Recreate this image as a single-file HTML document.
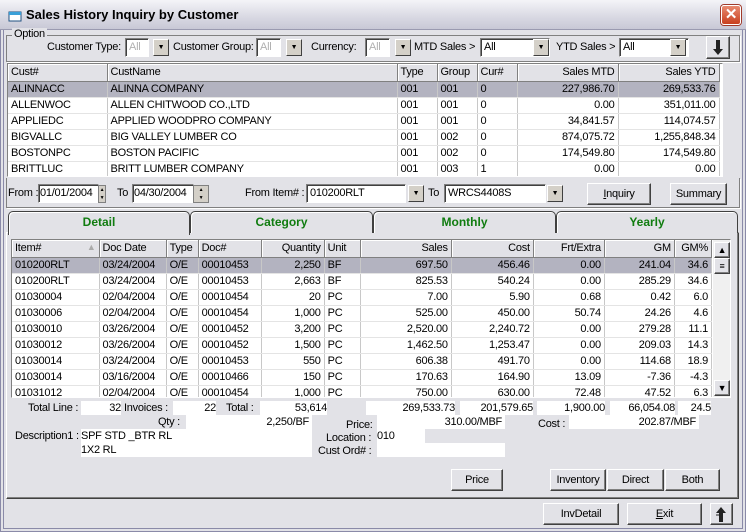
<!DOCTYPE html>
<html><head><meta charset="utf-8"><style>
*{box-sizing:border-box;margin:0;padding:0}
body{width:746px;height:532px;overflow:hidden;background:#e2e2e7;font-family:"Liberation Sans",sans-serif;font-size:11px;letter-spacing:-0.25px;color:#000;position:relative}
.a{position:absolute}
.win{left:0;top:0;width:746px;height:532px;border:1px solid #555566;border-left:4px double #8a8aa8;border-right:4px double #8a8aa8;border-bottom:4px double #8a8aa8}
.title{left:0;top:0;width:746px;height:30px;background:linear-gradient(#f4f4f8,#d8d8e2 60%,#c8c8d6);border-bottom:1px solid #9a9ab0}
.tt{left:26px;top:7px;font-weight:bold;font-size:13px;letter-spacing:0}
.close{left:721px;top:5px;width:20px;height:20px;background:linear-gradient(#e88a70,#c8401f);border:1px solid #fff;border-radius:3px;box-shadow:0 0 0 1px #a03a2a;color:#fff;font-weight:bold;font-size:15px;text-align:center;line-height:18px}
.inp{background:#fff;border:1px solid;border-color:#808080 #fff #fff #808080;box-shadow:inset 1px 1px #404040;height:19px;line-height:17px;padding-left:3px;white-space:nowrap;overflow:hidden}
.dis{color:#b0b0b0}
.dd{width:16px;height:17px;background:#d4d0c8;border:1px solid;border-color:#fff #404040 #404040 #fff;text-align:center;font-size:7px;line-height:15px}
.btn{background:#e2e2e7;border:1px solid;border-color:#fff #404040 #404040 #fff;box-shadow:inset -1px -1px #808080;text-align:center;line-height:20px;height:22px}
table{border-collapse:collapse;table-layout:fixed;background:#fff}
td{height:16px;border-right:1px solid #c8c8c8;border-bottom:1px solid #e4e4e4;padding:0 3px;white-space:nowrap;overflow:hidden;line-height:15px}
th{height:17px;font-weight:normal;text-align:left;background:#e2e2e7;border-right:1px solid #808080;border-bottom:1px solid #808080;box-shadow:inset 1px 1px #fff;padding:0 3px;white-space:nowrap;overflow:hidden}
.r{text-align:right}
tr.sel td{background:#b3b3c0}
.grid{overflow:hidden;border:1px solid;border-color:#808080 #fff #fff #808080;background:#fff}
.tab{top:211px;height:22px;border:1px solid #404040;border-bottom:none;border-radius:5px 5px 0 0;background:#e2e2e7;color:#107c10;font-weight:bold;font-size:12px;letter-spacing:0;text-align:center;line-height:20px;box-shadow:inset 1px 1px #fff}
.wf{background:#fff;height:14px;line-height:14px;white-space:nowrap;overflow:hidden}
</style></head><body>
<div class="a win"></div>
<div class="a title"></div>
<svg class="a" style="left:8px;top:10px" width="14" height="12"><rect x="1" y="2" width="12" height="9" fill="#fff" stroke="#205080"/><rect x="1" y="2" width="12" height="3" fill="#3aa0d8"/></svg>
<div class="a tt">Sales History Inquiry by Customer</div>
<div class="a close">✕</div>

<div class="a" style="left:6px;top:35px;width:734px;height:27px;border:1px solid #808080;box-shadow:1px 1px #fff"></div>
<div class="a" style="left:12px;top:28px;background:#e2e2e7;padding:0 2px">Option</div>
<div class="a" style="left:47px;top:41px">Customer Type:</div>
<div class="a inp dis" style="left:125px;top:38px;width:24px">All</div>
<div class="a dd" style="left:153px;top:39px">▼</div>
<div class="a" style="left:173px;top:41px">Customer Group:</div>
<div class="a inp dis" style="left:256px;top:38px;width:25px">All</div>
<div class="a dd" style="left:286px;top:39px">▼</div>
<div class="a" style="left:311px;top:41px">Currency:</div>
<div class="a inp dis" style="left:365px;top:38px;width:25px">All</div>
<div class="a dd" style="left:395px;top:39px">▼</div>
<div class="a" style="left:414px;top:41px">MTD Sales &gt;</div>
<div class="a inp" style="left:480px;top:38px;width:70px">All</div>
<div class="a dd" style="left:533px;top:39px">▼</div>
<div class="a" style="left:556px;top:41px">YTD Sales &gt;</div>
<div class="a inp" style="left:619px;top:38px;width:70px">All</div>
<div class="a dd" style="left:670px;top:39px">▼</div>
<div class="a btn" style="left:706px;top:36px;width:24px;height:23px"></div>
<svg class="a" style="left:712px;top:39px" width="12" height="17"><path d="M4 1h4v9h3l-5 6-5-6h3z" fill="#222"/></svg>

<div class="a grid" style="left:7px;top:63px;width:716px;height:114px">
<table style="width:711px">
<colgroup><col style="width:99px"><col style="width:290px"><col style="width:40px"><col style="width:40px"><col style="width:40px"><col style="width:101px"><col style="width:101px"></colgroup>
<tr><th>Cust#</th><th>CustName</th><th>Type</th><th>Group</th><th>Cur#</th><th class="r">Sales MTD</th><th class="r">Sales YTD</th></tr>
<tr class="sel"><td>ALINNACC</td><td>ALINNA COMPANY</td><td>001</td><td>001</td><td>0</td><td class="r">227,986.70</td><td class="r">269,533.76</td></tr>
<tr><td>ALLENWOC</td><td>ALLEN CHITWOOD CO.,LTD</td><td>001</td><td>001</td><td>0</td><td class="r">0.00</td><td class="r">351,011.00</td></tr>
<tr><td>APPLIEDC</td><td>APPLIED WOODPRO COMPANY</td><td>001</td><td>001</td><td>0</td><td class="r">34,841.57</td><td class="r">114,074.57</td></tr>
<tr><td>BIGVALLC</td><td>BIG VALLEY LUMBER CO</td><td>001</td><td>002</td><td>0</td><td class="r">874,075.72</td><td class="r">1,255,848.34</td></tr>
<tr><td>BOSTONPC</td><td>BOSTON PACIFIC</td><td>001</td><td>002</td><td>0</td><td class="r">174,549.80</td><td class="r">174,549.80</td></tr>
<tr><td>BRITTLUC</td><td>BRITT LUMBER COMPANY</td><td>001</td><td>003</td><td>1</td><td class="r">0.00</td><td class="r">0.00</td></tr>
</table></div>

<div class="a" style="left:6px;top:178px;width:734px;height:30px;border:1px solid #808080;border-top:none;box-shadow:1px 1px #fff"></div>
<div class="a" style="left:8px;top:187px">From :</div>
<div class="a inp" style="left:38px;top:184px;width:61px;padding-left:1px">01/01/2004</div>
<div class="a" style="left:98px;top:185px;width:8px;height:18px;background:#d4d0c8;border:1px solid #808080;font-size:5px;line-height:8px;text-align:center">▲<br>▼</div>
<div class="a" style="left:117px;top:187px">To</div>
<div class="a inp" style="left:132px;top:184px;width:62px;padding-left:1px">04/30/2004</div>
<div class="a" style="left:193px;top:185px;width:16px;height:18px;background:#d4d0c8;border:1px solid #808080;font-size:5px;line-height:8px;text-align:center">▲<br>▼</div>
<div class="a" style="left:245px;top:187px">From Item# :</div>
<div class="a inp" style="left:306px;top:184px;width:100px">010200RLT</div>
<div class="a dd" style="left:408px;top:185px">▼</div>
<div class="a" style="left:428px;top:187px">To</div>
<div class="a inp" style="left:444px;top:184px;width:102px">WRCS4408S</div>
<div class="a dd" style="left:547px;top:185px">▼</div>
<div class="a btn" style="left:587px;top:183px;width:64px"><u>I</u>nquiry</div>
<div class="a btn" style="left:670px;top:183px;width:57px">Summary</div>

<div class="a" style="left:6px;top:232px;width:733px;height:267px;border:1px solid;border-color:#fff #404040 #404040 #fff;box-shadow:inset -1px -1px #808080"></div>
<div class="a tab" style="left:8px;width:182px;height:24px;background:#e2e2e7;z-index:2">Detail</div>
<div class="a tab" style="left:190px;width:183px">Category</div>
<div class="a tab" style="left:373px;width:183px">Monthly</div>
<div class="a tab" style="left:556px;width:182px">Yearly</div>

<div class="a grid" style="left:11px;top:239px;width:720px;height:159px">
<table style="width:700px">
<colgroup><col style="width:87px"><col style="width:67px"><col style="width:32px"><col style="width:63px"><col style="width:63px"><col style="width:36px"><col style="width:91px"><col style="width:82px"><col style="width:71px"><col style="width:70px"><col style="width:37px"></colgroup>
<tr><th>Item#<span style="float:right;color:#aaa;font-size:9px">▲</span></th><th>Doc Date</th><th>Type</th><th>Doc#</th><th class="r">Quantity</th><th>Unit</th><th class="r">Sales</th><th class="r">Cost</th><th class="r">Frt/Extra</th><th class="r">GM</th><th class="r">GM%</th></tr>
<tr class="sel"><td>010200RLT</td><td>03/24/2004</td><td>O/E</td><td>00010453</td><td class="r">2,250</td><td>BF</td><td class="r">697.50</td><td class="r">456.46</td><td class="r">0.00</td><td class="r">241.04</td><td class="r">34.6</td></tr>
<tr><td>010200RLT</td><td>03/24/2004</td><td>O/E</td><td>00010453</td><td class="r">2,663</td><td>BF</td><td class="r">825.53</td><td class="r">540.24</td><td class="r">0.00</td><td class="r">285.29</td><td class="r">34.6</td></tr>
<tr><td>01030004</td><td>02/04/2004</td><td>O/E</td><td>00010454</td><td class="r">20</td><td>PC</td><td class="r">7.00</td><td class="r">5.90</td><td class="r">0.68</td><td class="r">0.42</td><td class="r">6.0</td></tr>
<tr><td>01030006</td><td>02/04/2004</td><td>O/E</td><td>00010454</td><td class="r">1,000</td><td>PC</td><td class="r">525.00</td><td class="r">450.00</td><td class="r">50.74</td><td class="r">24.26</td><td class="r">4.6</td></tr>
<tr><td>01030010</td><td>03/26/2004</td><td>O/E</td><td>00010452</td><td class="r">3,200</td><td>PC</td><td class="r">2,520.00</td><td class="r">2,240.72</td><td class="r">0.00</td><td class="r">279.28</td><td class="r">11.1</td></tr>
<tr><td>01030012</td><td>03/26/2004</td><td>O/E</td><td>00010452</td><td class="r">1,500</td><td>PC</td><td class="r">1,462.50</td><td class="r">1,253.47</td><td class="r">0.00</td><td class="r">209.03</td><td class="r">14.3</td></tr>
<tr><td>01030014</td><td>03/24/2004</td><td>O/E</td><td>00010453</td><td class="r">550</td><td>PC</td><td class="r">606.38</td><td class="r">491.70</td><td class="r">0.00</td><td class="r">114.68</td><td class="r">18.9</td></tr>
<tr><td>01030014</td><td>03/16/2004</td><td>O/E</td><td>00010466</td><td class="r">150</td><td>PC</td><td class="r">170.63</td><td class="r">164.90</td><td class="r">13.09</td><td class="r">-7.36</td><td class="r">-4.3</td></tr>
<tr><td>01031012</td><td>02/04/2004</td><td>O/E</td><td>00010454</td><td class="r">1,000</td><td>PC</td><td class="r">750.00</td><td class="r">630.00</td><td class="r">72.48</td><td class="r">47.52</td><td class="r">6.3</td></tr>
</table>
<div class="a" style="left:701px;top:0;width:17px;height:157px;background:#f0f0f0"></div>
<div class="a btn" style="left:702px;top:2px;width:16px;height:16px;line-height:14px;font-size:9px">▲</div>
<div class="a btn" style="left:702px;top:18px;width:16px;height:16px;line-height:14px;font-size:9px">≡</div>
<div class="a btn" style="left:702px;top:140px;width:16px;height:16px;line-height:14px;font-size:9px">▼</div>
</div>

<div class="a" style="left:28px;top:402px">Total Line :</div>
<div class="a wf r" style="left:81px;top:401px;width:40px">32</div>
<div class="a" style="left:124px;top:402px">Invoices :</div>
<div class="a wf r" style="left:173px;top:401px;width:43px">22</div>
<div class="a" style="left:226px;top:402px">Total :</div>
<div class="a wf r" style="left:260px;top:401px;width:67px">53,614</div>
<div class="a wf r" style="left:366px;top:401px;width:89px">269,533.73</div>
<div class="a wf r" style="left:460px;top:401px;width:73px">201,579.65</div>
<div class="a wf r" style="left:537px;top:401px;width:68px">1,900.00</div>
<div class="a wf r" style="left:610px;top:401px;width:65px">66,054.08</div>
<div class="a wf r" style="left:678px;top:401px;width:33px">24.5</div>

<div class="a" style="left:158px;top:416px">Qty :</div>
<div class="a wf r" style="left:186px;top:415px;width:126px;padding-right:3px">2,250/BF</div>
<div class="a" style="left:346px;top:419px">Price:</div>
<div class="a wf r" style="left:377px;top:415px;width:128px;padding-right:3px">310.00/MBF</div>
<div class="a" style="left:538px;top:418px">Cost :</div>
<div class="a wf r" style="left:569px;top:415px;width:130px;padding-right:3px">202.87/MBF</div>

<div class="a" style="left:15px;top:430px">Description1 :</div>
<div class="a wf" style="left:81px;top:429px;width:231px">SPF STD _BTR RL</div>
<div class="a" style="left:326px;top:432px">Location :</div>
<div class="a wf" style="left:377px;top:429px;width:48px">010</div>
<div class="a wf" style="left:81px;top:443px;width:231px">1X2 RL</div>
<div class="a" style="left:318px;top:445px">Cust Ord# :</div>
<div class="a wf" style="left:377px;top:443px;width:128px"></div>

<div class="a btn" style="left:451px;top:469px;width:52px">Price</div>
<div class="a btn" style="left:550px;top:469px;width:56px">Inventory</div>
<div class="a btn" style="left:607px;top:469px;width:57px">Direct</div>
<div class="a btn" style="left:665px;top:469px;width:55px">Both</div>

<div class="a btn" style="left:543px;top:503px;width:76px">InvDetail</div>
<div class="a btn" style="left:627px;top:503px;width:75px"><u>E</u>xit</div>
<div class="a btn" style="left:710px;top:503px;width:23px"></div>
<svg class="a" style="left:715px;top:506px" width="12" height="17"><path d="M6 1l5 6h-3v9h-4v-9h-3z" fill="#222"/><path d="M1 9h3" stroke="#222"/></svg>
</body></html>
